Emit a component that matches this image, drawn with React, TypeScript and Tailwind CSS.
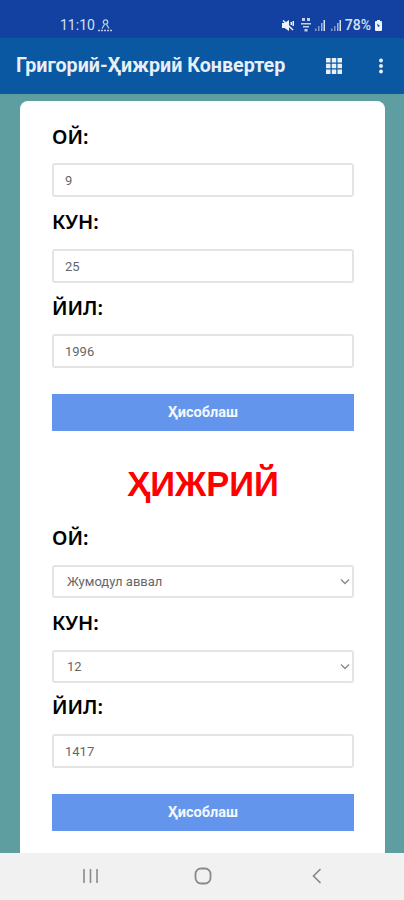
import React from 'react';

const Label: React.FC<{ text: string; className?: string }> = ({ text, className }) => (
    <label className={`block h-[26px] text-[20px] leading-[26px] font-semibold text-black font-['Noto_Sans',sans-serif] ${className ?? ''}`}>{text}</label>
);

const TextBox: React.FC<{ value: string; className?: string }> = ({ value, className }) => (
    <input
        readOnly
        value={value}
        className={`block w-full h-[34px] px-[11px] bg-white border-2 border-[#e4e4e4] rounded-[3px] text-[13px] text-[#666] outline-none ${className ?? ''}`}
    />
);

const Select: React.FC<{ value: string; className?: string }> = ({ value, className }) => (
    <div className={`relative ${className ?? ''}`}>
        <select
            value={value}
            onChange={() => undefined}
            className="block w-full h-[33px] pl-[13px] appearance-none bg-white border-2 border-[#e4e4e4] rounded-[3px] text-[13px] text-[#666] outline-none"
        >
            <option>{value}</option>
        </select>
        <svg className="absolute right-[4px] top-[13px] pointer-events-none" width="10" height="7" viewBox="0 0 10 7" fill="none" stroke="#888" strokeWidth="1.300">
            <path d="M1 1.500 5 5.500l4-4" />
        </svg>
    </div>
);

const CalcButton: React.FC<{ className?: string }> = ({ className }) => (
    <button className={`block w-full h-[37px] bg-[#6495ed] text-[#f4f7fd] text-[14.500px] font-bold ${className ?? ''}`}>Ҳисоблаш</button>
);

const Signal: React.FC<{ className?: string }> = ({ className }) => (
    <svg className={className} width="10" height="11" viewBox="0 0 10 11">
        <path d="M0 8.500h1.500V11H0zM3 6h1.500v5H3z" fill="#7f9ccb" />
        <path d="M6 3h1.500v8H6z" fill="#9db4d8" />
        <path d="M8.500 0H10v11H8.500z" fill="#d5e0f0" />
    </svg>
);

export default function App() {
    return (
        <div className="w-[404px] h-[900px] flex flex-col overflow-hidden bg-[#5f9ea0] font-['Roboto',sans-serif]">
            {/* status bar */}
            <div className="h-[38px] shrink-0 flex items-center justify-between pl-[60px] pr-[22px] pt-[14px] pb-[2px] bg-[#1241a1] text-[#d5e0f0] text-[14px]">
                <div className="flex items-center gap-[3px]">
                    <span>11:10</span>
                    <svg width="15" height="13" viewBox="0 0 15 13" fill="none" stroke="#b9cbe3" strokeWidth="1.300">
                        <circle cx="7.500" cy="3" r="2.200" />
                        <path d="M6.500 5.500 4 9.500M8.500 5.500l2.500 4" />
                        <path d="M0 11.500h15" strokeDasharray="2 1" />
                    </svg>
                </div>
                <div className="flex items-center">
                    <svg width="12" height="11" viewBox="0 0 12 11" fill="#eef3fa">
                        <path d="M0 3h2.500L7 0v11L2.500 8H0z" />
                        <path d="M1 0.500 11 10" stroke="#eef3fa" strokeWidth="1.500" />
                        <path d="M8.500 2H10v3H8.500zM10.500 1H12v5h-1.500z" />
                    </svg>
                    <svg className="ml-[7px]" width="10" height="14" viewBox="0 0 10 14" fill="#c3d2e8">
                        <path d="M1 0h3v3H1zM6 0h3v3H6zM0 5h10v1.500H0zM2 8h6v1.500H2zM3.500 11h3v2.500h-3z" />
                    </svg>
                    <Signal className="ml-[4px]" />
                    <Signal className="ml-[6px]" />
                    <span className="ml-[4px] font-medium">78%</span>
                    <svg className="ml-[4px]" width="7" height="11" viewBox="0 0 7 11" fill="#eef3fa">
                        <path d="M2 0h3v1h1a1 1 0 0 1 1 1v8a1 1 0 0 1-1 1H1a1 1 0 0 1-1-1V2a1 1 0 0 1 1-1h1z" />
                        <path d="M2 3.500l3 2.500-2 1z" fill="#1241a1" />
                    </svg>
                </div>
            </div>

            {/* app bar */}
            <div className="h-[56px] shrink-0 flex items-center pl-[16px] bg-[#0a57a2] text-[#e8eff7]">
                <span className="flex-1 text-[19.700px] font-bold whitespace-nowrap">Григорий-Ҳижрий Конвертер</span>
                <svg className="mr-[36px]" width="16" height="16" viewBox="0 0 16 16" fill="#e8eff7">
                    <path d="M0 0h4.500v4.500H0zM5.750 0h4.500v4.500h-4.500zM11.500 0H16v4.500h-4.500zM0 5.750h4.500v4.500H0zM5.750 5.750h4.500v4.500h-4.500zM11.500 5.750H16v4.500h-4.500zM0 11.500h4.500V16H0zM5.750 11.500h4.500V16h-4.500zM11.500 11.500H16V16h-4.500z" />
                </svg>
                <svg className="mr-[20px]" width="6" height="16" viewBox="0 0 6 16" fill="#e8eff7">
                    <circle cx="3" cy="2.500" r="2" />
                    <circle cx="3" cy="8" r="2" />
                    <circle cx="3" cy="13.500" r="2" />
                </svg>
            </div>

            {/* form card */}
            <div className="flex-1 min-h-0 pt-[7px] pl-[20px] pr-[19px] overflow-hidden">
                <div className="h-full rounded-t-[8px] bg-white pl-[32px] pr-[31px] pt-[23px]">
                    <Label text="ОЙ:" />
                    <TextBox value="9" className="mt-[13px]" />
                    <Label text="КУН:" className="mt-[12px]" />
                    <TextBox value="25" className="mt-[14px]" />
                    <Label text="ЙИЛ:" className="mt-[12px]" />
                    <TextBox value="1996" className="mt-[13px]" />
                    <CalcButton className="mt-[26px]" />
                    <h2 className="mt-[33px] h-[40px] text-center text-[34.500px] leading-[40px] font-bold text-[#ff0000] font-['Liberation_Sans',sans-serif]">ҲИЖРИЙ</h2>
                    <Label text="ОЙ:" className="mt-[21px]" />
                    <Select value="Жумодул аввал" className="mt-[14px]" />
                    <Label text="КУН:" className="mt-[12px]" />
                    <Select value="12" className="mt-[14px]" />
                    <Label text="ЙИЛ:" className="mt-[11px]" />
                    <TextBox value="1417" className="mt-[14px]" />
                    <CalcButton className="mt-[26px]" />
                </div>
            </div>

            {/* nav bar */}
            <div className="h-[47px] shrink-0 grid grid-cols-[180px_46px_178px] bg-[#f1f1f1] items-center pb-[1px]">
                <div className="flex justify-start pl-[82px]">
                    <svg width="17" height="16" viewBox="0 0 17 16" stroke="#8a8a8a" strokeWidth="1.600" fill="none">
                        <path d="M2 1v14M8.500 1v14M15 1v14" />
                    </svg>
                </div>
                <div className="flex justify-center">
                    <svg width="18" height="18" viewBox="0 0 18 18" stroke="#8a8a8a" strokeWidth="1.800" fill="none">
                        <rect x="1.500" y="1.500" width="15" height="15" rx="5.500" />
                    </svg>
                </div>
                <div className="flex justify-start pl-[86px]">
                    <svg width="10" height="16" viewBox="0 0 10 16" stroke="#8a8a8a" strokeWidth="1.700" fill="none">
                        <path d="M8.500 1 1.500 8l7 7" />
                    </svg>
                </div>
            </div>
        </div>
    );
}
